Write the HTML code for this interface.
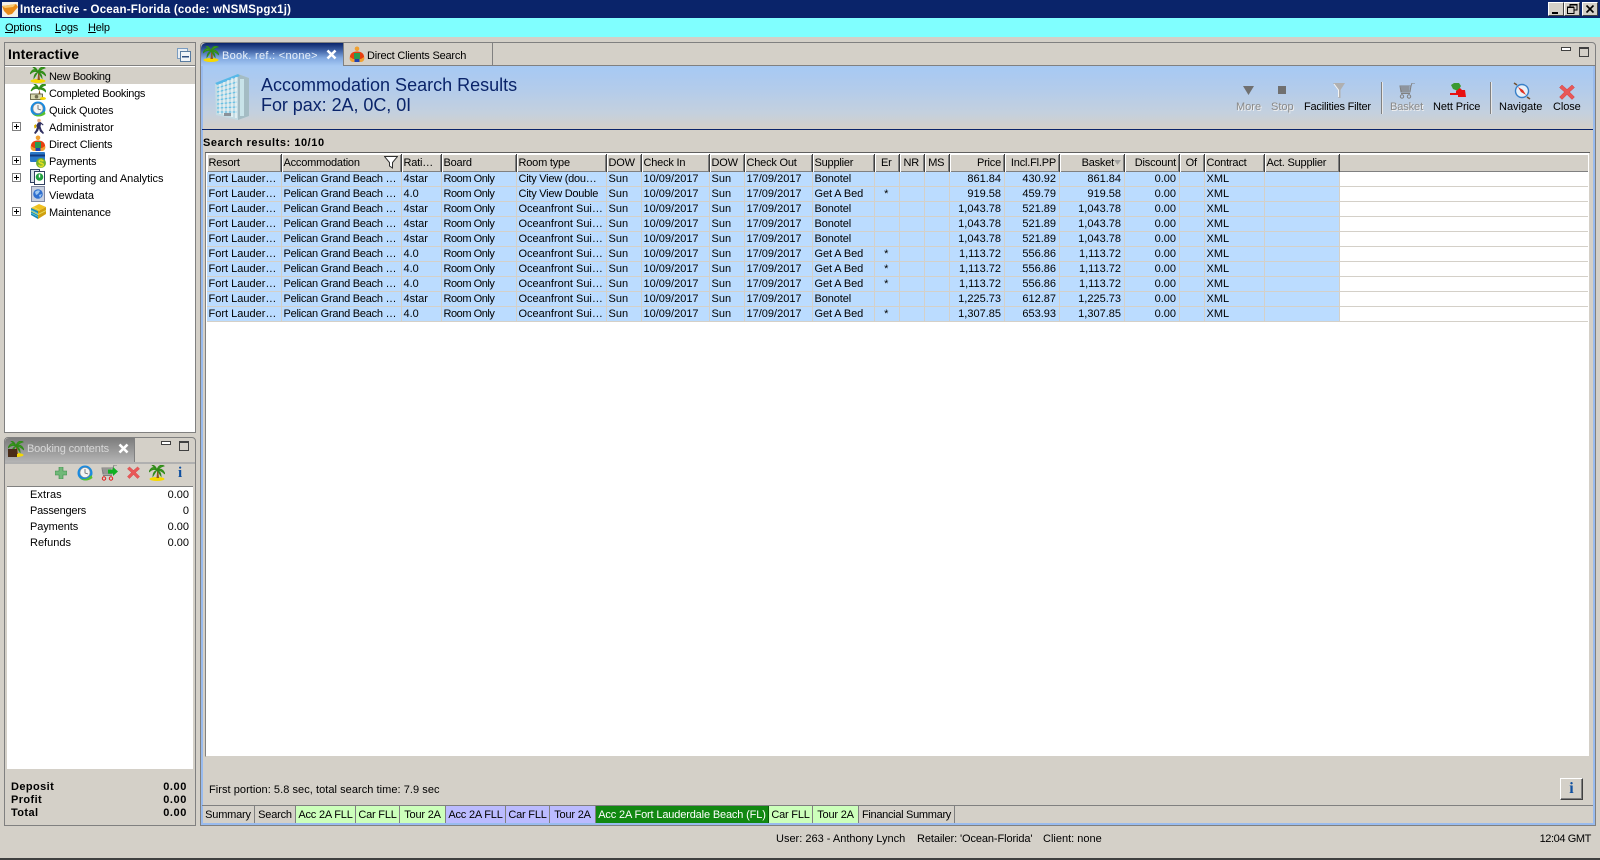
<!DOCTYPE html>
<html><head><meta charset="utf-8"><title>Interactive</title>
<style>
html,body{margin:0;padding:0}
body{width:1600px;height:860px;position:relative;overflow:hidden;background:#d4d0c8;font:11px/13px "Liberation Sans",sans-serif;color:#000}
.a{position:absolute}
.t{position:absolute;white-space:nowrap;line-height:13px}
.ic{position:absolute;width:16px;height:16px;overflow:visible}
.u{text-decoration:underline}
.b{font-weight:bold}
.tr{letter-spacing:-.2px}
table{position:absolute;left:207px;top:154px;border-collapse:separate;border-spacing:0;table-layout:fixed;width:1381px}
th{height:18px;padding:1px 3px 0 1.5px;font-weight:normal;text-align:left;background:#d4d0c8;box-sizing:border-box;border-right:1px solid #404040;box-shadow:inset 1px 1px 0 #fff,inset -1px -1px 0 #808080;white-space:nowrap;overflow:hidden;position:relative;letter-spacing:-.2px}
th:last-child{border-right:0;box-shadow:inset 0 1px 0 #fff,inset 0 -1px 0 #808080}
td{height:15px;box-sizing:border-box;padding:1px 3px 0 1.5px;background:#bbdcff;border-right:1px solid #d4d0c8;border-bottom:1px solid #d4d0c8;white-space:nowrap;overflow:hidden;line-height:13px}
td:nth-child(2){letter-spacing:-.25px}
td:nth-child(4){letter-spacing:-.45px}
td:nth-child(10){letter-spacing:-.1px}
td.r,th.r{text-align:right}
td.c,th.c{text-align:center}
td.w{background:#fff;border-right:0}
.s{letter-spacing:-.25px}
.tb{position:absolute;top:806px;height:17px;line-height:18px;box-sizing:border-box;border-right:1px solid #808080;text-align:center;white-space:nowrap;letter-spacing:-.2px}
</style></head><body>

<svg width="0" height="0" style="position:absolute">
<symbol id="palm" viewBox="0 0 16 16">
<ellipse cx="8" cy="14" rx="7.500" ry="2" fill="#f6d800"/>
<path d="M8 5L9.500 8 10 13H7.500L8 8Z" fill="#8a5a20"/>
<path d="M8 5C5 1 2 2 0 7 3 4 5 4 8 5ZM8 5C7 2 5 0 3 0 5 2 7 3 8 5ZM8 5C9 1 12 -1 15 1 12 2 10 3 8 5ZM8 5C11 3 14 4 16 9 13 6 11 5 8 5ZM8 5C6 6 4 8 4 11 6 8 7 6 8 5ZM8 5C10 6 12 8 12 11 10 8 9 6 8 5Z" fill="#3c9a20" stroke="#2f8a18" stroke-width=".9"/>
</symbol>
<symbol id="palmm" viewBox="0 0 16 16">
<path d="M9 5L10 8 10.500 10H8.500L9 8Z" fill="#8a5a20"/>
<path d="M9 5C6 1 3 2 1 7 4 4 6 4 9 5ZM9 5C8 2 6 0 4 0 6 2 8 3 9 5ZM9 5C10 1 13 -1 16 1 13 2 11 3 9 5ZM9 5C12 3 15 4 16 8 14 6 12 5 9 5Z" fill="#3c9a20" stroke="#2f8a18" stroke-width=".9"/>
<rect x="0.500" y="10" width="12" height="5.500" fill="#d8d8b0" stroke="#505030" stroke-width=".8"/>
<circle cx="6.500" cy="12.700" r="1.800" fill="#707050"/>
<ellipse cx="13" cy="14.500" rx="3" ry="1.500" fill="#f6d800"/>
</symbol>
<symbol id="clock" viewBox="0 0 16 16">
<circle cx="8" cy="8" r="7.500" fill="#1a8ae0"/>
<circle cx="8" cy="7.500" r="5" fill="#f4f4f4" stroke="#909090" stroke-width=".6"/>
<path d="M8 4V8L11 9" stroke="#606060" fill="none" stroke-width=".8"/>
<path d="M2 12C5 15 10 15 14.500 10L15.500 13C11 16.500 5 16.500 2 12Z" fill="#58c030"/>
</symbol>
<symbol id="run" viewBox="0 0 16 16">
<circle cx="9" cy="2.500" r="1.800" fill="#e8b080"/>
<path d="M8 4.500L6 8 7 9 6 12 4 15 5.500 16 8 13 9 10.500 10 13.500 13 16 14 15 11.500 11.500 10.500 8.500 11 6 13 7.500 13.500 6.500 10.500 4Z" fill="#303060"/>
<path d="M6 6L4 7.500 4.500 10.500 6.500 9.500Z" fill="#d8b000"/>
</symbol>
<symbol id="client" viewBox="0 0 16 16">
<circle cx="8" cy="2.800" r="2.300" fill="#f0a030"/>
<path d="M1 14C0 8 3 5.500 8 5.500S16 8 15 14Z" fill="#e84010"/>
<rect x="5" y="7" width="6" height="6" fill="#2a9a50"/>
<path d="M1 11C0 14 2 16 4 16H12C14 16 16 14 15 11L12 13H4Z" fill="#f0a030"/>
<rect x="5.500" y="13" width="5" height="3" fill="#2040b0"/>
</symbol>
<symbol id="pay" viewBox="0 0 16 16">
<rect x="0" y="0" width="15" height="10" rx="1" fill="#2a78c8"/>
<rect x="0" y="2.500" width="15" height="2" fill="#103a80"/>
<circle cx="11" cy="11" r="5" fill="#70b030"/>
<text x="11" y="15" font-size="11" font-family="Liberation Sans" font-weight="bold" text-anchor="middle" fill="#e8e020">$</text>
</symbol>
<symbol id="rep" viewBox="0 0 16 16">
<rect x=".5" y=".5" width="9" height="13" fill="#d8e0e8" stroke="#304060"/>
<rect x="4.500" y="2.500" width="10" height="13" fill="#fff" stroke="#304060"/>
<circle cx="9.500" cy="8" r="3.800" fill="#20a040"/>
<path d="M9.500 5.500V8.500" stroke="#fff" stroke-width="1.400"/>
</symbol>
<symbol id="view" viewBox="0 0 16 16">
<rect x="1.500" y=".5" width="13" height="15" fill="#c8d0e0" stroke="#8088a0"/>
<circle cx="8" cy="8" r="4.800" fill="#3070d0"/>
<path d="M5 6C7 4 9 4 10 5L8 8 6 9ZM9 9L12 8 10 12Z" fill="#a0c8f0"/>
</symbol>
<symbol id="maint" viewBox="0 0 16 16">
<path d="M1 5L9 1 16 4 8 8Z" fill="#f0c020"/>
<path d="M1 5L8 8V16L1 12Z" fill="#1888b0"/>
<path d="M8 8L16 4V11L8 16Z" fill="#d0a010"/>
<path d="M1 8L8 11.500 16 7.500M3 4L10 7.500" stroke="#e8e060" fill="none" stroke-width=".8"/>
<path d="M1 7L8 10.500M1 10L8 13.500" stroke="#60c8e8" fill="none" stroke-width=".8"/>
</symbol>
<symbol id="x" viewBox="0 0 16 16">
<path d="M3 1L8 5.500 13 1 15.500 3.500 10.500 8 15.500 13 13 15.500 8 10.500 3 15.500 .5 13 5.500 8 .5 3.500Z" fill="#e85858" stroke="#d04040" stroke-width=".5"/>
</symbol>
<symbol id="bld" viewBox="0 0 36 48">
<path d="M1 10L24 1 35 5V43L24 47 2 42Z" fill="#c4dce4"/>
<path d="M24 1L35 5V43L24 47Z" fill="#a4bcc4"/>
<path d="M1 10L24 1 26 3 3 12Z" fill="#58b8e8"/>
<g stroke="#68c0e4" stroke-width="1.300">
<path d="M3 15L23 9M3 19L23 14M3 23L23 19M3 27L23 24M3 31L23 29M3 35L23 34M3 39L23 39"/>
</g>
<g stroke="#f8fcfc" stroke-width="1.100">
<path d="M6 11V41M10 9V42M14 7V43M18 5V44M22 4V45"/>
</g>
<path d="M28 6V43" stroke="#d8f4fa" stroke-width="4" opacity=".7"/>
<rect x="10" y="40" width="7" height="3" fill="#8a929a"/>
</symbol>
<symbol id="cart" viewBox="0 0 16 16">
<path d="M1 3H12L11 9H2Z" fill="none" stroke="currentColor"/>
<path d="M3 3V9M5 3V9M7 3V9M9 3V9M1.500 5H12M1.500 7H11.500M12 3L13 0H16" fill="none" stroke="currentColor" stroke-width=".9"/>
<path d="M2 10.500H11" stroke="currentColor"/>
<circle cx="3" cy="13.500" r="1.700" fill="none" style="stroke:var(--w,#e02020)"/>
<circle cx="10" cy="13.500" r="1.700" fill="none" style="stroke:var(--w,#e02020)"/>
</symbol>
</svg>

<!-- title bar -->
<div class="a" style="left:0;top:0;width:1600px;height:18px;background:#0a246a"></div>
<svg class="a" style="left:2px;top:2px" width="16" height="15" viewBox="0 0 16 15"><rect width="16" height="15" fill="#f4f0e8"/><path d="M0 4L14 2 16 5 10 12 6 13 2 9Z" fill="#e88a18"/><path d="M0 4L14 2 11 5 3 6Z" fill="#f8c870"/></svg>
<div class="t b" style="left:20px;top:3px;color:#fff;font-size:11.500px;letter-spacing:.2px;line-height:15px">Interactive - Ocean-Florida (code: wNSMSpgx1j)</div>
<svg class="a" style="left:1548px;top:2px" width="50" height="14" viewBox="0 0 50 14">
<g fill="#d4d0c8" stroke="#fff"><rect x=".5" y=".5" width="15" height="13"/><rect x="16.500" y=".5" width="15" height="13"/><rect x="34.500" y=".5" width="15" height="13"/></g>
<path d="M15.500 .5V13.500H.5M31.500 .5V13.500H16.500M49.500 .5V13.500H34.500" fill="none" stroke="#404040"/>
<rect x="4" y="10" width="6" height="2" fill="#000"/>
<path d="M22 5V2.500H29V8H26.500M19.500 5.500H26V11.500H19.500Z" fill="none" stroke="#000"/><path d="M19 5H26M22 3H29" stroke="#000"/>
<path d="M38.500 3.500L45.500 10.500M45.500 3.500L38.500 10.500" stroke="#000" stroke-width="1.600"/>
</svg>

<!-- menu -->
<div class="a" style="left:0;top:18px;width:1600px;height:19px;background:#80ffff"></div>
<div class="t tr" style="left:5px;top:22px"><span class="u">O</span>ptions</div>
<div class="t tr" style="left:55px;top:22px"><span class="u">L</span>ogs</div>
<div class="t tr" style="left:88px;top:22px"><span class="u">H</span>elp</div>

<!-- left panel -->
<div class="a" style="left:4px;top:42px;width:192px;height:391px;box-sizing:border-box;border:1px solid #808080;background:#fff"></div>
<div class="a" style="left:5px;top:43px;width:190px;height:23px;background:#d4d0c8;border-bottom:1px solid #808080;box-sizing:border-box"></div>
<div class="t b" style="left:8px;top:47px;font-size:14px;line-height:14px;letter-spacing:.1px">Interactive</div>
<svg class="a" style="left:177px;top:48px" width="14" height="14" viewBox="0 0 14 14"><rect x=".5" y=".5" width="10" height="10" fill="#e8eef4" stroke="#7a9cc0"/><rect x="3.500" y="3.500" width="10" height="10" fill="#f0f4f8" stroke="#5a7ca0"/><rect x="5" y="8" width="7" height="1.500" fill="#305080"/></svg>
<div class="a" style="left:5px;top:67px;width:190px;height:17px;background:#d4d0c8"></div>

<svg class="ic" style="left:30px;top:67px"><use href="#palm"/></svg><div class="t" style="left:49px;top:71px;letter-spacing:-.3px">New Booking</div>
<svg class="ic" style="left:30px;top:84px"><use href="#palmm"/></svg><div class="t" style="left:49px;top:88px;letter-spacing:-.3px">Completed Bookings</div>
<svg class="ic" style="left:30px;top:101px"><use href="#clock"/></svg><div class="t" style="left:49px;top:105px;letter-spacing:-.2px">Quick Quotes</div>
<svg class="ic" style="left:30px;top:118px"><use href="#run"/></svg><div class="t" style="left:49px;top:122px">Administrator</div>
<svg class="ic" style="left:30px;top:135px"><use href="#client"/></svg><div class="t" style="left:49px;top:139px;letter-spacing:-.15px">Direct Clients</div>
<svg class="ic" style="left:30px;top:152px"><use href="#pay"/></svg><div class="t" style="left:49px;top:156px;letter-spacing:-.2px">Payments</div>
<svg class="ic" style="left:30px;top:169px"><use href="#rep"/></svg><div class="t" style="left:49px;top:173px;letter-spacing:-.05px">Reporting and Analytics</div>
<svg class="ic" style="left:30px;top:186px"><use href="#view"/></svg><div class="t" style="left:49px;top:190px">Viewdata</div>
<svg class="ic" style="left:30px;top:203px"><use href="#maint"/></svg><div class="t" style="left:49px;top:207px;letter-spacing:-.1px">Maintenance</div>

<svg class="a" style="left:12px;top:122px" width="9" height="9"><rect x=".5" y=".5" width="8" height="8" fill="#fff" stroke="#808080"/><path d="M2 4.500H7M4.500 2V7" stroke="#000"/></svg>
<svg class="a" style="left:12px;top:156px" width="9" height="9"><rect x=".5" y=".5" width="8" height="8" fill="#fff" stroke="#808080"/><path d="M2 4.500H7M4.500 2V7" stroke="#000"/></svg>
<svg class="a" style="left:12px;top:173px" width="9" height="9"><rect x=".5" y=".5" width="8" height="8" fill="#fff" stroke="#808080"/><path d="M2 4.500H7M4.500 2V7" stroke="#000"/></svg>
<svg class="a" style="left:12px;top:207px" width="9" height="9"><rect x=".5" y=".5" width="8" height="8" fill="#fff" stroke="#808080"/><path d="M2 4.500H7M4.500 2V7" stroke="#000"/></svg>

<!-- booking contents -->
<div class="a" style="left:4px;top:437px;width:192px;height:389px;box-sizing:border-box;border:1px solid #808080;border-radius:4px 4px 0 0"></div>
<div class="a" style="left:5px;top:438px;width:130px;height:24px;background:linear-gradient(#7c7c7c,#b4b4b4);border-radius:4px 0 0 0;border-right:1px solid #808080;box-sizing:border-box"></div>
<div class="a" style="left:5px;top:462px;width:190px;height:2px;background:#b0b0b0"></div>
<svg class="ic" style="left:8px;top:441px"><use href="#palm"/></svg>
<div class="a" style="left:8px;top:449px;width:9px;height:8px;background:#4a2c18"></div>
<div class="t" style="left:27px;top:443px;color:#d8d8d8;letter-spacing:-.15px">Booking contents</div>
<svg class="a" style="left:118px;top:443px" width="11" height="11"><path d="M1.500 1.500L9.500 9.500M9.500 1.500L1.500 9.500" stroke="#fff" stroke-width="2.600"/></svg>
<div class="a" style="left:161px;top:441px;width:10px;height:4px;box-sizing:border-box;border:1px solid #404040;background:#fff"></div>
<div class="a" style="left:179px;top:441px;width:10px;height:10px;box-sizing:border-box;border:1px solid #404040;border-top-width:2px"></div>
<div class="a" style="left:7px;top:486px;width:186px;height:283px;background:#fff;border-top:1px solid #808080;box-sizing:border-box"></div>
<svg class="a" style="left:55px;top:467px" width="12" height="12" viewBox="0 0 12 12"><path d="M4 0H8V4H12V8H8V12H4V8H0V4H4Z" fill="#70b878" stroke="#3a8a48" stroke-width=".6"/></svg>
<svg class="ic" style="left:77px;top:465px"><use href="#clock"/></svg>
<svg class="ic" style="left:101px;top:465px;color:#808080"><use href="#cart"/></svg>
<svg class="a" style="left:108px;top:467px" width="10" height="9"><path d="M0 2.500H5V0L10 4.500 5 9V6.500H0Z" fill="#10b020"/></svg>
<svg class="a" style="left:127px;top:466px" width="13" height="13"><use href="#x"/></svg>
<svg class="ic" style="left:149px;top:465px"><use href="#palm"/></svg>
<div class="t" style="left:178px;top:465px;font:bold 15px/16px 'Liberation Serif',serif;color:#1050a0">i</div>

<div class="t" style="left:30px;top:489px;letter-spacing:.1px">Extras</div><div class="t" style="right:1411px;top:489px">0.00</div>
<div class="t" style="left:30px;top:505px;letter-spacing:-.2px">Passengers</div><div class="t" style="right:1411px;top:505px">0</div>
<div class="t" style="left:30px;top:521px;letter-spacing:-.1px">Payments</div><div class="t" style="right:1411px;top:521px">0.00</div>
<div class="t" style="left:30px;top:537px">Refunds</div><div class="t" style="right:1411px;top:537px">0.00</div>

<div class="t b" style="left:11px;top:781px;letter-spacing:.4px">Deposit</div><div class="t b" style="right:1413px;top:781px;letter-spacing:.6px">0.00</div>
<div class="t b" style="left:11px;top:794px;letter-spacing:.4px">Profit</div><div class="t b" style="right:1413px;top:794px;letter-spacing:.6px">0.00</div>
<div class="t b" style="left:11px;top:807px;letter-spacing:.4px">Total</div><div class="t b" style="right:1413px;top:807px;letter-spacing:.6px">0.00</div>

<!-- right panel -->
<div class="a" style="left:200px;top:42px;width:1396px;height:784px;box-sizing:border-box;border:1px solid #808080;border-radius:4px 4px 0 0"></div>
<div class="a" style="left:201px;top:66px;width:1394px;height:759px;box-sizing:border-box;border:2px solid #99bbee;border-top:0"></div>
<div class="a" style="left:343px;top:65px;width:1252px;height:1px;background:#808080"></div>
<!-- header band -->
<div class="a" style="left:203px;top:66px;width:1390px;height:63px;background:linear-gradient(#a6c9f4 0%,#b4ccea 40%,#c4d0de 75%,#d4d0c8 100%)"></div>
<div class="a" style="left:202px;top:129px;width:1391px;height:1px;background:#0a246a"></div>
<!-- tabs -->
<div class="a" style="left:201px;top:43px;width:142px;height:23px;background:linear-gradient(#0a246a 0,#3a5ca0 30%,#80a8e0 65%,#a6c9f4 100%);border-radius:5px 0 0 0"></div>
<div class="a" style="left:343px;top:43px;width:150px;height:23px;box-sizing:border-box;border:1px solid #808080;border-top:0"></div>
<svg class="ic" style="left:203px;top:46px"><use href="#palm"/></svg>
<div class="t" style="left:222px;top:50px;color:#e8f0fa;letter-spacing:.3px">Book. ref.: &lt;none&gt;</div>
<svg class="a" style="left:326px;top:49px" width="11" height="11"><path d="M1.500 1.500L9.500 9.500M9.500 1.500L1.500 9.500" stroke="#fff" stroke-width="2.600"/></svg>
<svg class="ic" style="left:349px;top:46px"><use href="#client"/></svg>
<div class="t" style="left:367px;top:50px;letter-spacing:-.2px">Direct Clients Search</div>
<div class="a" style="left:1561px;top:47px;width:10px;height:4px;box-sizing:border-box;border:1px solid #404040;background:#fff"></div>
<div class="a" style="left:1579px;top:47px;width:10px;height:10px;box-sizing:border-box;border:1px solid #404040;border-top-width:2px"></div>

<svg class="a" style="left:214px;top:73px" width="36" height="48"><use href="#bld"/></svg>
<div class="t" style="left:261px;top:75px;font-size:18px;line-height:20px;color:#0a246a">Accommodation Search Results</div>
<div class="t" style="left:261px;top:95px;font-size:18px;line-height:20px;color:#0a246a;letter-spacing:-.05px">For pax: 2A, 0C, 0I</div>

<!-- toolbar -->
<svg class="a" style="left:1243px;top:85px" width="11" height="11"><path d="M0 1H11L5.500 10Z" fill="#707070"/></svg>
<div class="t" style="left:1236px;top:101px;color:#8a8a8a;text-shadow:1px 1px 0 #f0f0f0">More</div>
<div class="a" style="left:1278px;top:86px;width:8px;height:8px;background:#707070"></div>
<div class="t" style="left:1271px;top:101px;color:#8a8a8a;text-shadow:1px 1px 0 #f0f0f0">Stop</div>
<svg class="a" style="left:1333px;top:83px" width="12" height="16" viewBox="0 0 12 16"><path d="M0 0H12L7.500 7V15H5.500V7Z" fill="#b0b0b0"/><path d="M1 1L5.500 7V14" stroke="#f4f4f4" fill="none"/></svg>
<div class="t" style="left:1304px;top:101px;letter-spacing:-.2px">Facilities Filter</div>
<div class="a" style="left:1381px;top:82px;width:1px;height:32px;background:#808080;border-right:1px solid #e8e8e8"></div>
<svg class="ic" style="left:1399px;top:83px;color:#808080;--w:#808080"><use href="#cart"/></svg>
<div class="t" style="left:1390px;top:101px;color:#8a8a8a;text-shadow:1px 1px 0 #f0f0f0;letter-spacing:-.1px">Basket</div>
<svg class="ic" style="left:1450px;top:83px" viewBox="0 0 16 16"><path d="M1 2L4 0H9L11 3 8 8 3 6Z" fill="#3a9a30"/><path d="M0 10H6V8L10 5 12 7 15 7 16 14H8V12H0Z" fill="#e81010"/></svg>
<div class="t" style="left:1433px;top:101px;letter-spacing:-.1px">Nett Price</div>
<div class="a" style="left:1490px;top:82px;width:1px;height:32px;background:#808080;border-right:1px solid #e8e8e8"></div>
<svg class="ic" style="left:1514px;top:83px" viewBox="0 0 16 16"><circle cx="8" cy="8" r="6.500" fill="#e8f0f8" stroke="#3880c8" stroke-width="1.400"/><path d="M4 4L9 7 12 12 7 9Z" fill="#e03020"/><path d="M0 0L3 2M13 14L16 16" stroke="#705030" stroke-width="1.600"/></svg>
<div class="t" style="left:1499px;top:101px">Navigate</div>
<svg class="ic" style="left:1559px;top:84px"><use href="#x"/></svg>
<div class="t" style="left:1553px;top:101px;letter-spacing:-.1px">Close</div>

<div class="t b" style="left:203px;top:137px;letter-spacing:.55px">Search results: 10/10</div>

<!-- grid -->
<div class="a" style="left:205px;top:152px;width:1385px;height:605px;box-sizing:border-box;border:1px solid;border-color:#808080 #d4d0c8 #d4d0c8 #808080;background:#fff"></div>
<div class="a" style="left:205px;top:152px;width:1385px;height:1px;background:#606060"></div>
<table>
<colgroup><col style="width:75px"><col style="width:120px"><col style="width:40px"><col style="width:75px"><col style="width:90px"><col style="width:35px"><col style="width:68px"><col style="width:35px"><col style="width:68px"><col style="width:62px"><col style="width:25px"><col style="width:25px"><col style="width:25px"><col style="width:55px"><col style="width:55px"><col style="width:65px"><col style="width:55px"><col style="width:25px"><col style="width:60px"><col style="width:75px"><col style="width:248px"></colgroup>
<tr><th>Resort</th><th>Accommodation<svg style="position:absolute;right:3px;top:2px" width="14" height="13"><path d="M.5 .5H13.500L8.500 6.500V12L5.500 10V6.500Z" fill="#fff" stroke="#303030"/></svg></th><th>Rati…</th><th>Board</th><th>Room type</th><th>DOW</th><th>Check In</th><th>DOW</th><th>Check Out</th><th>Supplier</th><th class="c">Er</th><th class="c">NR</th><th class="c">MS</th><th class="r">Price</th><th class="r">Incl.Fl.PP</th><th class="r" style="padding-right:10px">Basket<svg style="position:absolute;right:3px;top:6px" width="7" height="5"><path d="M0 0H7L3.500 5Z" fill="#a0a0a0"/></svg></th><th class="r">Discount</th><th class="c">Of</th><th>Contract</th><th>Act. Supplier</th><th></th></tr>
<tr><td>Fort Lauder…</td><td>Pelican Grand Beach …</td><td>4star</td><td>Room Only</td><td><span class="s">City View (dou…</span></td><td>Sun</td><td>10/09/2017</td><td>Sun</td><td>17/09/2017</td><td>Bonotel</td><td class="c"></td><td></td><td></td><td class="r">861.84</td><td class="r">430.92</td><td class="r">861.84</td><td class="r">0.00</td><td></td><td>XML</td><td></td><td class="w"></td></tr>
<tr><td>Fort Lauder…</td><td>Pelican Grand Beach …</td><td>4.0</td><td>Room Only</td><td><span class="s">City View Double</span></td><td>Sun</td><td>10/09/2017</td><td>Sun</td><td>17/09/2017</td><td>Get A Bed</td><td class="c">*</td><td></td><td></td><td class="r">919.58</td><td class="r">459.79</td><td class="r">919.58</td><td class="r">0.00</td><td></td><td>XML</td><td></td><td class="w"></td></tr>
<tr><td>Fort Lauder…</td><td>Pelican Grand Beach …</td><td>4star</td><td>Room Only</td><td>Oceanfront Sui…</td><td>Sun</td><td>10/09/2017</td><td>Sun</td><td>17/09/2017</td><td>Bonotel</td><td class="c"></td><td></td><td></td><td class="r">1,043.78</td><td class="r">521.89</td><td class="r">1,043.78</td><td class="r">0.00</td><td></td><td>XML</td><td></td><td class="w"></td></tr>
<tr><td>Fort Lauder…</td><td>Pelican Grand Beach …</td><td>4star</td><td>Room Only</td><td>Oceanfront Sui…</td><td>Sun</td><td>10/09/2017</td><td>Sun</td><td>17/09/2017</td><td>Bonotel</td><td class="c"></td><td></td><td></td><td class="r">1,043.78</td><td class="r">521.89</td><td class="r">1,043.78</td><td class="r">0.00</td><td></td><td>XML</td><td></td><td class="w"></td></tr>
<tr><td>Fort Lauder…</td><td>Pelican Grand Beach …</td><td>4star</td><td>Room Only</td><td>Oceanfront Sui…</td><td>Sun</td><td>10/09/2017</td><td>Sun</td><td>17/09/2017</td><td>Bonotel</td><td class="c"></td><td></td><td></td><td class="r">1,043.78</td><td class="r">521.89</td><td class="r">1,043.78</td><td class="r">0.00</td><td></td><td>XML</td><td></td><td class="w"></td></tr>
<tr><td>Fort Lauder…</td><td>Pelican Grand Beach …</td><td>4.0</td><td>Room Only</td><td>Oceanfront Sui…</td><td>Sun</td><td>10/09/2017</td><td>Sun</td><td>17/09/2017</td><td>Get A Bed</td><td class="c">*</td><td></td><td></td><td class="r">1,113.72</td><td class="r">556.86</td><td class="r">1,113.72</td><td class="r">0.00</td><td></td><td>XML</td><td></td><td class="w"></td></tr>
<tr><td>Fort Lauder…</td><td>Pelican Grand Beach …</td><td>4.0</td><td>Room Only</td><td>Oceanfront Sui…</td><td>Sun</td><td>10/09/2017</td><td>Sun</td><td>17/09/2017</td><td>Get A Bed</td><td class="c">*</td><td></td><td></td><td class="r">1,113.72</td><td class="r">556.86</td><td class="r">1,113.72</td><td class="r">0.00</td><td></td><td>XML</td><td></td><td class="w"></td></tr>
<tr><td>Fort Lauder…</td><td>Pelican Grand Beach …</td><td>4.0</td><td>Room Only</td><td>Oceanfront Sui…</td><td>Sun</td><td>10/09/2017</td><td>Sun</td><td>17/09/2017</td><td>Get A Bed</td><td class="c">*</td><td></td><td></td><td class="r">1,113.72</td><td class="r">556.86</td><td class="r">1,113.72</td><td class="r">0.00</td><td></td><td>XML</td><td></td><td class="w"></td></tr>
<tr><td>Fort Lauder…</td><td>Pelican Grand Beach …</td><td>4star</td><td>Room Only</td><td>Oceanfront Sui…</td><td>Sun</td><td>10/09/2017</td><td>Sun</td><td>17/09/2017</td><td>Bonotel</td><td class="c"></td><td></td><td></td><td class="r">1,225.73</td><td class="r">612.87</td><td class="r">1,225.73</td><td class="r">0.00</td><td></td><td>XML</td><td></td><td class="w"></td></tr>
<tr><td>Fort Lauder…</td><td>Pelican Grand Beach …</td><td>4.0</td><td>Room Only</td><td>Oceanfront Sui…</td><td>Sun</td><td>10/09/2017</td><td>Sun</td><td>17/09/2017</td><td>Get A Bed</td><td class="c">*</td><td></td><td></td><td class="r">1,307.85</td><td class="r">653.93</td><td class="r">1,307.85</td><td class="r">0.00</td><td></td><td>XML</td><td></td><td class="w"></td></tr>
</table>

<div class="t" style="left:209px;top:784px;letter-spacing:.05px">First portion: 5.8 sec, total search time: 7.9 sec</div>
<div class="a" style="left:1560px;top:778px;width:23px;height:22px;box-sizing:border-box;border:1px solid;border-color:#fff #404040 #404040 #fff;background:#d4d0c8;box-shadow:inset -1px -1px 0 #808080;text-align:center;font:bold 16px/20px 'Liberation Serif',serif;color:#1050a0">i</div>

<!-- bottom tabs -->
<div class="a" style="left:202px;top:805px;width:1391px;height:1px;background:#808080"></div>
<div class="tb" style="left:202px;width:53px">Summary</div>
<div class="tb" style="left:255px;width:41px">Search</div>
<div class="tb" style="left:296px;width:60px;background:#ccffbb">Acc 2A FLL</div>
<div class="tb" style="left:356px;width:44px;background:#ccffbb">Car FLL</div>
<div class="tb" style="left:400px;width:46px;background:#ccffbb">Tour 2A</div>
<div class="tb" style="left:446px;width:60px;background:#bbbbff">Acc 2A FLL</div>
<div class="tb" style="left:506px;width:44px;background:#bbbbff">Car FLL</div>
<div class="tb" style="left:550px;width:46px;background:#bbbbff">Tour 2A</div>
<div class="tb" style="left:596px;width:173px;background:#118811;color:#fff;border-right:1px solid #0a5a0a;letter-spacing:-.15px">Acc 2A Fort Lauderdale Beach (FL)</div>
<div class="tb" style="left:769px;width:44px;background:#ccffbb">Car FLL</div>
<div class="tb" style="left:813px;width:46px;background:#ccffbb">Tour 2A</div>
<div class="tb" style="left:859px;width:96px;letter-spacing:-.3px">Financial Summary</div>

<!-- status -->
<div class="t" style="left:776px;top:833px">User: 263 - Anthony Lynch</div>
<div class="t" style="left:917px;top:833px;letter-spacing:-.1px">Retailer: 'Ocean-Florida'</div>
<div class="t" style="left:1043px;top:833px">Client: none</div>
<div class="t" style="right:9px;top:833px;letter-spacing:-.4px">12:04 GMT</div>
<div class="a" style="left:0;top:858px;width:1600px;height:2px;background:#404040"></div>
</body></html>
